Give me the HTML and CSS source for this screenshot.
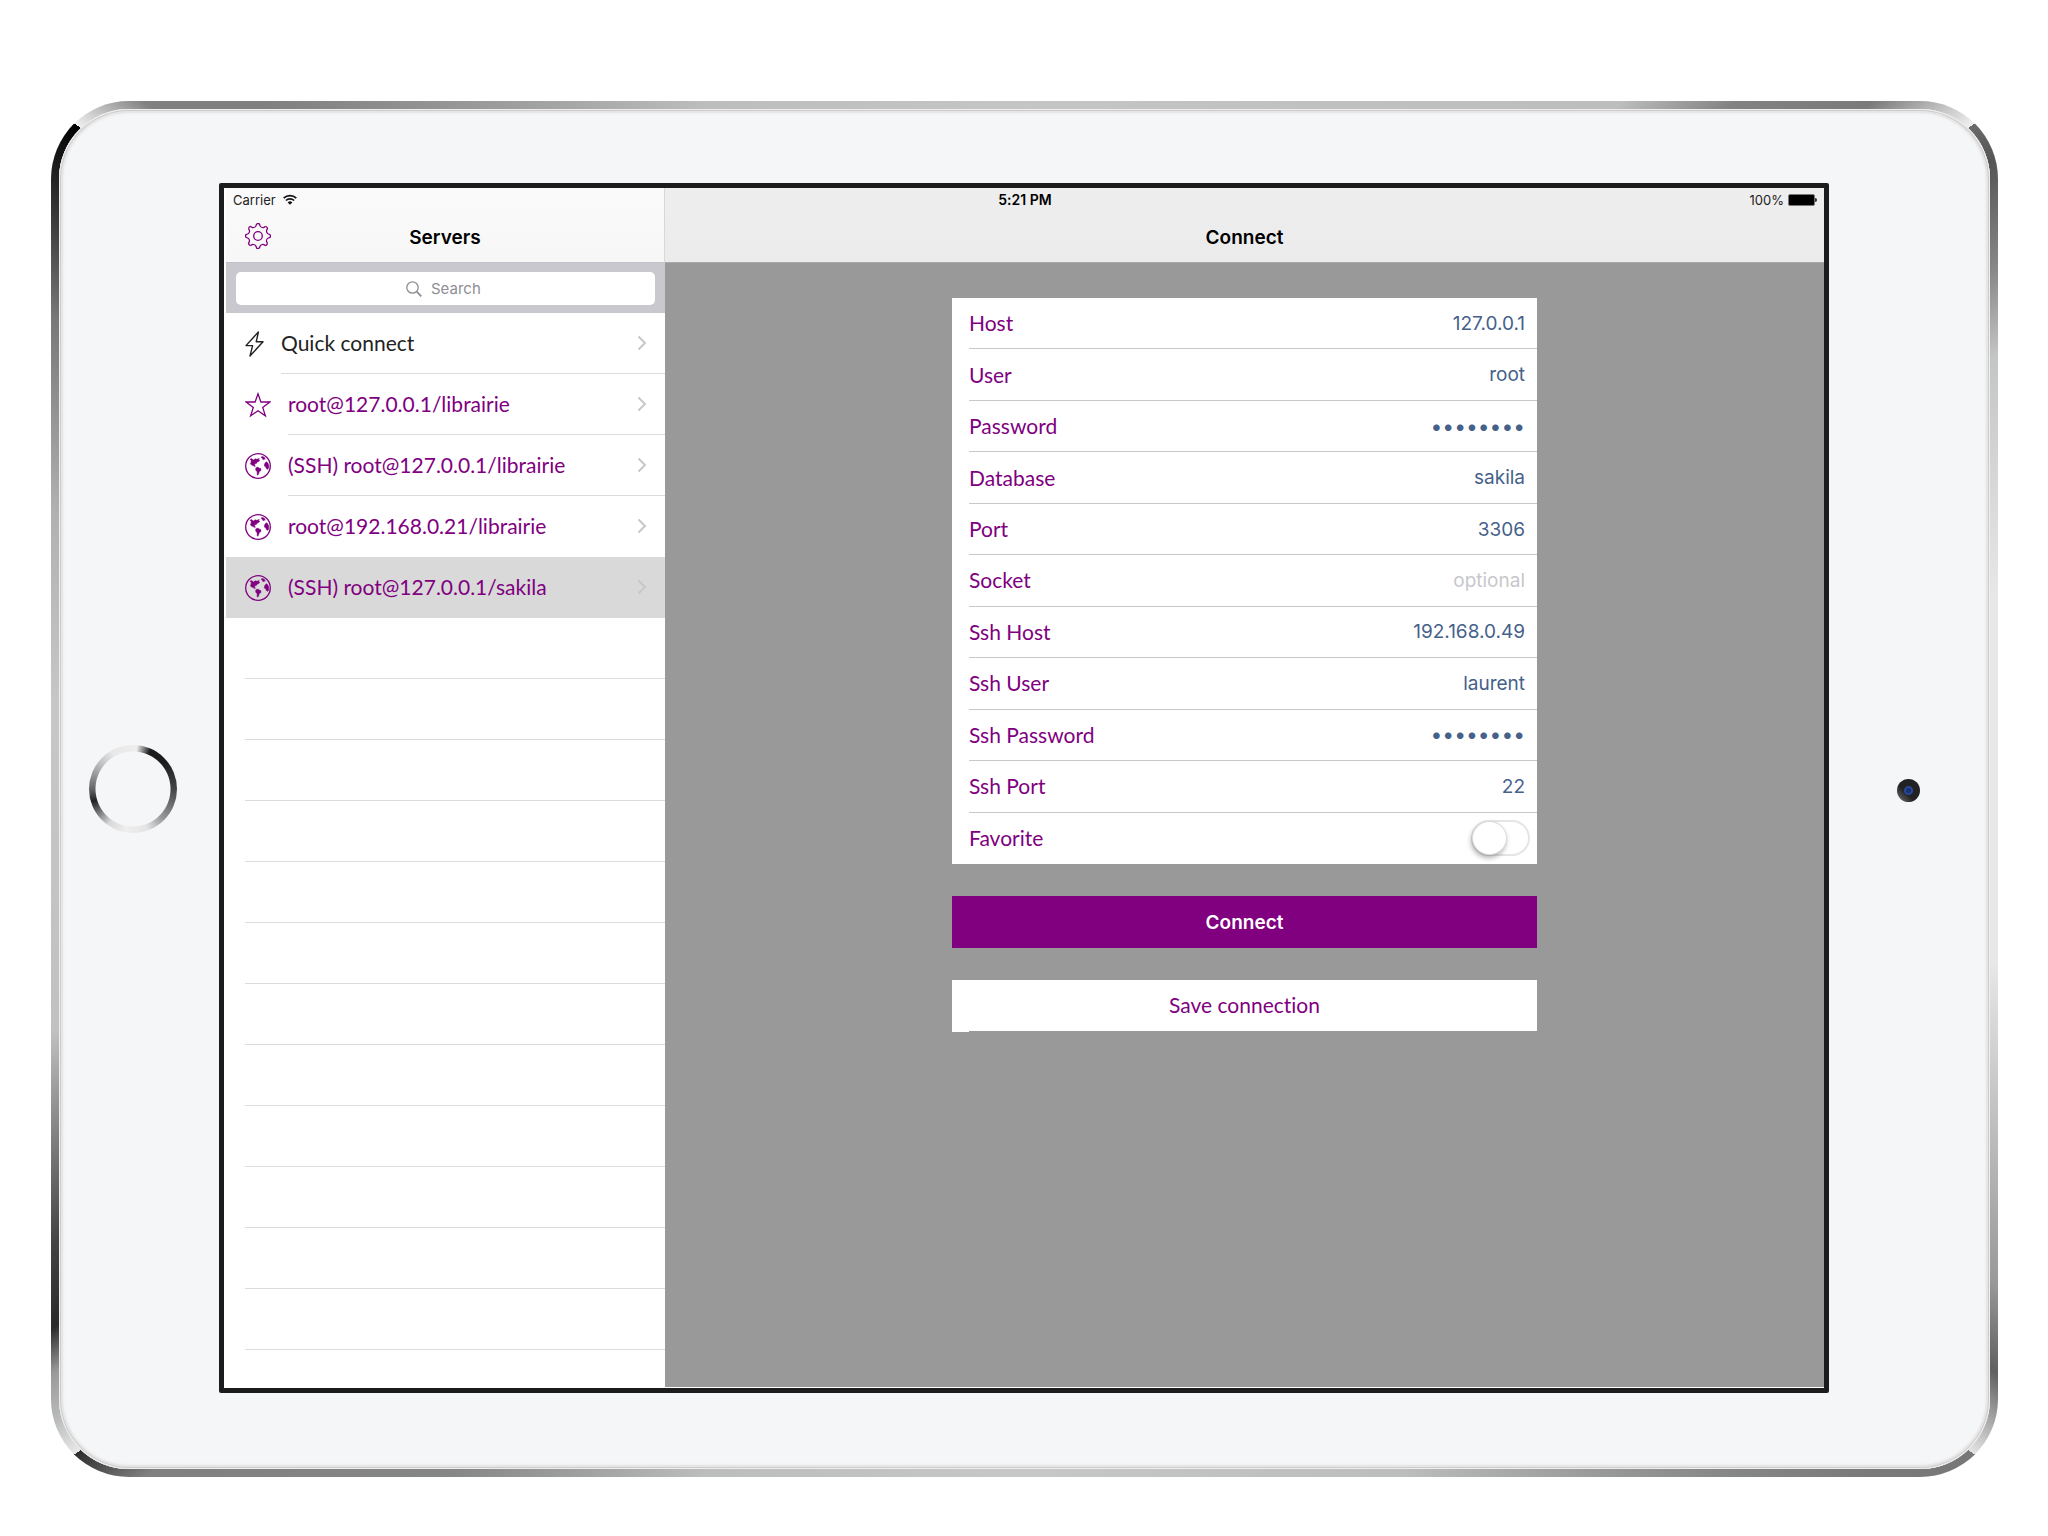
FILE: index.html
```html
<!DOCTYPE html>
<html lang="en">
<head>
<meta charset="utf-8">
<title>Servers – Connect</title>
<link rel="stylesheet" href="styles.css">
</head>
<body>
<svg class="sprite" aria-hidden="true">
  <symbol id="chevron" viewBox="0 0 10 16"><path d="M1.5 1.500 8 8l-6.500 6.500" fill="none" stroke="currentColor" stroke-width="2"/></symbol>
  <symbol id="globe" viewBox="0 0 26 26">
    <circle cx="13" cy="13" r="12.300" fill="none" stroke="currentColor" stroke-width="1.300"/>
    <g fill="currentColor" stroke="currentColor" stroke-width=".5" stroke-linejoin="round">
      <path d="M5 6.200 6.500 5.600 8.300 7l2-1.200 1.500.5 2.400-.9-.6 1.500 1.200.3-1 1.300-1.600.6-.8 1.300-1.600.4-.3 1.400 1 .8-1 .6-1.500-1.100-1.400-.4-1.200-1.300.6-1.500.2-1.800z"/>
      <path d="m10.800 14.900 1.800-.8 1.500.8 1.900.9-.2 1.900-1.500.8-.4 1.600-.9 2h-.8l-.1-3.300-1.400-1.700z"/>
      <path d="m16 4 1.800-.6 1.900 1.300.5 1.500-1.300-.2-.7.900-.8-1.400z"/>
      <path d="m21.300 8.700 1.400 1 1 2.300.1 2.600-.9 1.700-1.400-.6-.6-1.600-1.500-1 .2-2.300z"/>
    </g>
  </symbol>
  <symbol id="star" viewBox="0 0 26 26"><path d="M13 1.800 15.900 10h9l-7.200 5.400 2.700 8.400-7.400-5.100-7.400 5.100 2.700-8.400L1.100 10h9z" fill="none" stroke="currentColor" stroke-width="1.300"/></symbol>
  <symbol id="bolt" viewBox="0 0 19 26"><path d="M13.400 1 1 14.600h6.600L5 25 18 10.800h-6.800z" fill="none" stroke="currentColor" stroke-width="1.400" stroke-linejoin="round"/></symbol>
  <symbol id="gear" viewBox="-13 -13 26 26">
    <g fill="none" stroke="currentColor" stroke-width="1.300">
      <path id="tooth" d="M-1.400-12.100Q0-12.800 1.400-12.100L2-10.300C2.600-8.900 4.450-8.130 5.870-8.700L7.570-9.550"/>
      <use href="#tooth" transform="rotate(45)"/><use href="#tooth" transform="rotate(90)"/>
      <use href="#tooth" transform="rotate(135)"/><use href="#tooth" transform="rotate(180)"/>
      <use href="#tooth" transform="rotate(225)"/><use href="#tooth" transform="rotate(270)"/>
      <use href="#tooth" transform="rotate(315)"/>
      <circle r="4.300"/>
    </g>
  </symbol>
</svg>

<div class="device">
  <div class="face">
    <button class="home" type="button" aria-label="Home"></button>

    <main class="screen">
      <div class="status">
        <span class="status-left">Carrier
          <svg width="14" height="11" viewBox="0 0 14 11"><g fill="none" stroke="#111" stroke-width="1.700"><path d="M.7 4.100a9 9 0 0 1 12.600 0"/><path d="M2.900 6.500a5.900 5.900 0 0 1 8.200 0"/></g><path d="M7 10.800 4.700 8.400a3.300 3.300 0 0 1 4.600 0z" fill="#111"/></svg>
        </span>
        <span class="status-time">5:21 PM</span>
        <span class="status-right">100%
          <svg width="29" height="12" viewBox="0 0 29 12"><rect x=".5" y=".5" width="26" height="11" rx="1.500" fill="#000" stroke="#777"/><path d="M27 4c1.300 0 2 .9 2 2s-.7 2-2 2z" fill="#333"/></svg>
        </span>
      </div>

      <section class="sidebar">
        <header class="nav">
          <button class="settings" type="button" aria-label="Settings"><svg width="26" height="26"><use href="#gear"/></svg></button>
          <h1>Servers</h1>
        </header>
        <div class="search-bar">
          <label class="search">
            <svg width="16" height="16" viewBox="0 0 16 16"><g fill="none" stroke="#8e8e93" stroke-width="1.300"><circle cx="6.500" cy="6.500" r="5.700"/><path d="m10.700 10.700 4.600 4.600" stroke-width="1.800"/></g></svg>
            <input type="search" placeholder="Search" aria-label="Search">
          </label>
        </div>
        <ul class="servers">
          <li><a class="quick" href="#"><svg class="icon" width="19" height="26"><use href="#bolt"/></svg><span class="cell">Quick connect<svg class="chevron"><use href="#chevron"/></svg></span></a></li>
          <li><a href="#"><svg class="icon" width="26" height="26"><use href="#star"/></svg><span class="cell">root@127.0.0.1/librairie<svg class="chevron"><use href="#chevron"/></svg></span></a></li>
          <li><a href="#"><svg class="icon" width="26" height="26"><use href="#globe"/></svg><span class="cell">(SSH) root@127.0.0.1/librairie<svg class="chevron"><use href="#chevron"/></svg></span></a></li>
          <li><a href="#"><svg class="icon" width="26" height="26"><use href="#globe"/></svg><span class="cell last">root@192.168.0.21/librairie<svg class="chevron"><use href="#chevron"/></svg></span></a></li>
          <li><a class="selected" href="#" aria-current="true"><svg class="icon" width="26" height="26"><use href="#globe"/></svg><span class="cell last">(SSH) root@127.0.0.1/sakila<svg class="chevron"><use href="#chevron"/></svg></span></a></li>
        </ul>
        <div class="empty-rows"></div>
      </section>

      <section class="detail">
        <header class="nav"><h2>Connect</h2></header>
        <form class="form">
          <div class="fields">
            <div class="field"><label for="host">Host</label><input id="host" type="text" value="127.0.0.1"></div>
            <div class="field"><label for="user">User</label><input id="user" type="text" value="root"></div>
            <div class="field"><label for="password">Password</label><input id="password" type="password" value="password"></div>
            <div class="field"><label for="database">Database</label><input id="database" type="text" value="sakila"></div>
            <div class="field"><label for="port">Port</label><input id="port" type="text" value="3306"></div>
            <div class="field"><label for="socket">Socket</label><input id="socket" type="text" placeholder="optional"></div>
            <div class="field"><label for="ssh-host">Ssh Host</label><input id="ssh-host" type="text" value="192.168.0.49"></div>
            <div class="field"><label for="ssh-user">Ssh User</label><input id="ssh-user" type="text" value="laurent"></div>
            <div class="field"><label for="ssh-password">Ssh Password</label><input id="ssh-password" type="password" value="password"></div>
            <div class="field"><label for="ssh-port">Ssh Port</label><input id="ssh-port" type="text" value="22"></div>
            <div class="field"><label for="favorite">Favorite</label><input class="switch" id="favorite" type="checkbox" role="switch"></div>
          </div>
          <button class="primary" type="button">Connect</button>
          <button class="secondary" type="button">Save connection</button>
        </form>
      </section>
    </main>

    <div class="camera"></div>
  </div>
</div>
</body>
</html>
```
FILE: styles.css
```css
* { box-sizing: border-box; }

:root {
  --purple: #800080;
  --label: "Lato", "Open Sans", sans-serif;
  --system: "Inter", "Roboto", sans-serif;
}

body {
  margin: 0;
  padding: 101px 50px 59px 51px;
  background: #fff;
  font-family: var(--system);
  font-variant-ligatures: none;
  color: #000;
}

h1, h2, ul { margin: 0; padding: 0; }
button, input { margin: 0; padding: 0; border: 0; font: inherit; background: none; }
a { color: inherit; text-decoration: none; }
svg { display: block; flex: none; }
.sprite { position: absolute; width: 0; height: 0; }

/* Polished metal rim: highlights run round the device and break at each corner */
.device {
  display: flex;
  min-height: calc(100vh - 160px);
  padding: 8px;
  border-radius: 78px;
  background: conic-gradient(
    #c4c6c5 0deg, #bcbebd 41deg, #828282 46deg, #7a7a7a 51deg, #f0f0f0 55deg,
    #6a6a6a 55deg, #555 57deg, #8a8a8a 62deg, #c4c6c5 66deg, #e8e8e8 79deg,
    #e8e8e8 100deg, #bbb 110deg, #999 117deg, #606060 121deg, #e4e4e4 125deg,
    #777 125deg, #7a7a7a 129deg, #858786 134deg, #bcbebd 151deg, #c6c8c7 180deg,
    #bcbebd 205deg, #858786 220deg, #808080 232deg, #2c2c2c 235deg,
    #e8e8e8 235deg, #b8baba 237deg, #999 239deg, #2a2a2a 241deg, #444 245deg, #c0c2c1 256deg,
    #c6c8c7 275deg, #b0b2b1 286deg, #777 296deg, #333 301deg, #000 305deg,
    #f0f0f0 305deg, #808080 308deg, #808080 312deg, #bcbebd 335deg, #c4c6c5 360deg);
}

.face {
  flex: 1;
  display: grid;
  grid-template-columns: 160px 1fr 161px;
  align-items: center;
  padding: 74px 0 76px;
  border-radius: 70px;
  background: #f5f6f8;
  box-shadow: inset 0 0 0 1px #f0eeee, inset 0 0 0 2px #cdcbcb, inset 0 0 0 4px #e6e6e7, inset 0 0 2px 5px #eeeff0;
}

.home {
  width: 88px;
  height: 88px;
  margin: 2px 0 0 30px;
  border-radius: 50%;
  background:
    radial-gradient(closest-side, #f5f6f8 0 37px, transparent 38px),
    conic-gradient(#ededed 0deg, #eee 5deg, #1c1c1c 24deg, #1c1c1c 50deg, #444 90deg, #999 135deg, #e4e4e4 160deg, #eee 190deg, #d8d8d8 215deg, #222 253deg, #666 270deg, #bbb 305deg, #e8e8e8 330deg, #ededed 360deg);
}

.camera {
  justify-self: center;
  width: 23px;
  height: 23px;
  margin: 4px 2px 0 0;
  border-radius: 50%;
  background:
    radial-gradient(circle, #1b2f6b 0 2px, #27479a 3px 4px, transparent 5px),
    linear-gradient(45deg, #777, #222 40%, #222);
}

.screen {
  position: relative;
  align-self: stretch;
  display: flex;
  padding: 0 0 1px 2px;
  border: 5px solid #1c1c1c;
  border-radius: 2px;
  background: #fff;
}

.status {
  position: absolute;
  inset: 0 0 auto 0;
  display: grid;
  grid-template-columns: 1fr auto 1fr;
  align-items: center;
  height: 23px;
  padding: 0 7px 0 9px;
  font-size: 14px;
}
.status-left, .status-right { display: flex; align-items: center; gap: 7px; font-size: 13px; color: #222; }
.status-right { justify-content: flex-end; gap: 4px; }
.status-time { font-weight: 600; }

.nav {
  display: grid;
  grid-template-columns: 19px 26px 1fr 45px;
  align-items: center;
  height: 75px;
  padding-top: 22px;
  border-bottom: 1px solid #b4b4b8;
}
.nav h1, .nav h2 { grid-column: 3; grid-row: 1; padding-top: 4px; text-align: center; font-size: 19px; font-weight: 600; line-height: 24px; }
.settings { grid-column: 2; grid-row: 1; height: 26px; color: var(--purple); }

.sidebar { flex: 0 0 439px; display: flex; flex-direction: column; background: #fff; }
.sidebar .nav { background: linear-gradient(#fbfafa, #f7f7f7); border-right: 1px solid #d8d8d8; border-bottom-color: #c2c1c8; }

.search-bar { padding: 9px 10px 8px; background: #c9c8ce; }
.search {
  display: flex;
  align-items: center;
  justify-content: center;
  gap: 9px;
  height: 33px;
  border-radius: 5px;
  background: #fff;
}
.search input { width: 54px; height: 20px; font-size: 15px; outline: 0; appearance: none; }
.search input::-webkit-search-cancel-button { display: none; }
.search input::placeholder { color: #8e8e93; opacity: 1; }

.servers { list-style: none; font-family: var(--label); font-size: 21px; line-height: 24px; color: var(--purple); }
.servers a { display: flex; align-items: center; gap: 17px; height: 61px; padding-left: 19px; }
.servers .quick { color: #222; }
.servers .selected { background: #d9d9d9; }
.cell {
  flex: 1;
  display: flex;
  align-items: center;
  justify-content: space-between;
  height: 61px;
  padding: 0 18px 1px 0;
  border-bottom: 1px solid #dcdcde;
}
.cell.last { border-color: transparent; }
.chevron { width: 10px; height: 16px; color: #c7c7cc; }

.empty-rows {
  flex: 1;
  margin-left: 19px;
  background: repeating-linear-gradient(transparent 0 60px, #dcdcde 60px 61px);
}

.detail { flex: 1; display: flex; flex-direction: column; background: #999; }
.detail .nav { grid-template-columns: 0 0 1fr; background: linear-gradient(#eee, #ebebeb); border-bottom-color: #a8a8a8; }

.form {
  display: flex;
  flex-direction: column;
  gap: 32px;
  width: 585px;
  max-width: 100%;
  margin: 0 auto;
  padding: 35px 0;
}
.fields { display: grid; grid-auto-rows: 1fr; min-height: 566px; padding-left: 17px; background: #fff; }
.field { display: flex; align-items: center; border-bottom: 1px solid #c8c8ca; }
.field:last-child { border-bottom: 0; }
.field label { font-family: var(--label); font-size: 21px; line-height: 24px; color: var(--purple); }
.field input { flex: 1; min-width: 0; height: 30px; padding-right: 12px; text-align: right; font-size: 19px; color: #45618a; outline: 0; }
.field input[type="password"] { font-size: 21px; }
.field input::placeholder { color: #c7c7cc; opacity: 1; }

.field .switch {
  flex: 0 0 59px;
  display: flex;
  height: 36px;
  margin: 0 7px 0 auto;
  padding: 0;
  border: 2px solid #e5e5e5;
  border-radius: 18px;
  appearance: none;
}
.switch::before {
  content: "";
  width: 33px;
  height: 32px;
  border-radius: 50%;
  background: #fff;
  box-shadow: 0 0 0 1px #ddd, -1px 3px 5px 1px rgba(0, 0, 0, .3);
}

.form button { height: 52px; }
.primary { background: var(--purple); color: #fff; font-size: 19px; font-weight: 600; }
.form .secondary {
  padding-bottom: 3px;
  background: linear-gradient(#999, #999) bottom right / calc(100% - 17px) 1px no-repeat #fff;
  color: var(--purple);
  font-family: var(--label);
  font-size: 21px;
}
```
